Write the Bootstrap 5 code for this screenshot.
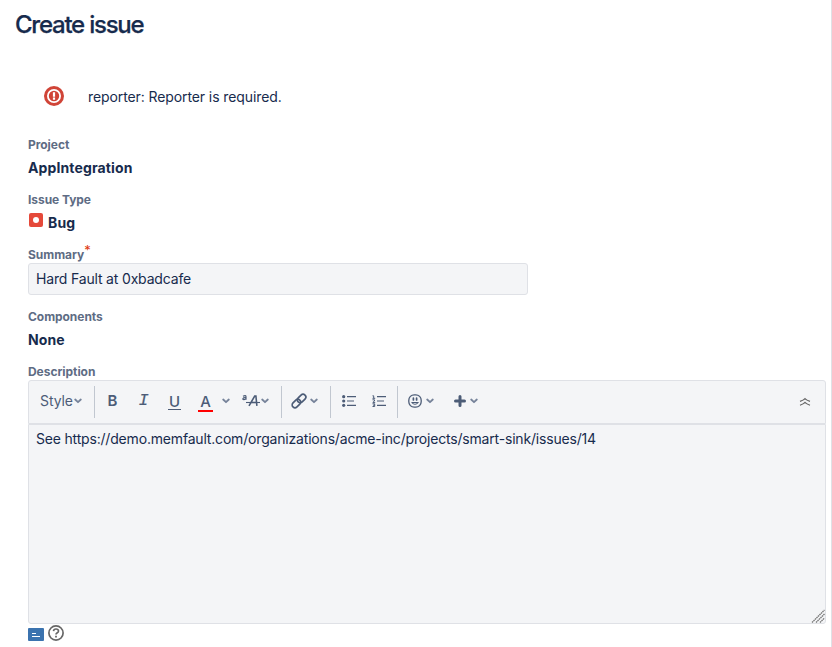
<!DOCTYPE html>
<html lang="en">
<head>
<meta charset="utf-8">
<meta name="viewport" content="width=device-width, initial-scale=1">
<title>Create issue</title>
<link href="https://cdn.jsdelivr.net/npm/bootstrap@5.3.0/dist/css/bootstrap.min.css" rel="stylesheet">
<style>
body{font-family:Inter,"Liberation Sans",sans-serif;font-size:14px;line-height:20px;color:#172b4d;background:#fff;overflow:hidden}
.page{width:832px;height:647px;border-right:1px solid #dfe1e6;padding:9px 5px 0 15px}
.title{font-size:24px;line-height:32px;font-weight:500;letter-spacing:-1.24px;color:#172b4d;-webkit-text-stroke:.25px #172b4d}
.notice{margin:45px 0 0 28px;height:22px}
.notice svg{margin-top:-2px}
.notice-text{margin-left:23px;letter-spacing:-.1px}
.fields{padding-left:13px;margin-top:29px}
.field{height:55px}
.field-label{font-size:12px;line-height:16px;font-weight:700;letter-spacing:-.05px;color:#5e6c84;display:block}
.field-value{font-weight:700;line-height:20px;margin-top:5px;height:20px;letter-spacing:.12px}
.field-summary{height:62px}
.req{color:#de350b;font-size:13px;font-weight:400;position:relative;top:-4px;line-height:1}
.text-input{width:500px;height:32px;border:1px solid #dfe1e6;border-radius:3px;background:#f4f5f7;color:#172b4d;padding:0 7px 2px;font-size:14px;line-height:20px;letter-spacing:-.17px}
.editor-bar{height:44px;border:1px solid #dfe1e6;border-radius:3px 3px 0 0;background:#f4f5f7;color:#4c5c77;padding-top:5px}
.tool-group{height:32px;border-right:1px solid #c1c7d0;padding-bottom:2px}
.tool-group:last-of-type{border-right:0}
.tool{width:31px;border:0;background:none;padding:0;color:#4c5c77;font-size:16px;line-height:20px;text-align:center}
.tool-b{font-weight:600;font-size:15px}
.ital{font-family:"Liberation Mono",monospace;font-style:italic;font-size:17px;-webkit-text-stroke:.2px #4c5c77}
.under{border-bottom:1px solid #4c5c77;display:inline-block;line-height:14px;padding:0 1px;font-weight:500;font-size:15px}
.colour{border-bottom:2px solid #f00;display:inline-block;line-height:17px;padding:0 2px;font-weight:500;font-size:15px}
.g-style{width:66px;padding-left:11px}
.style-name{width:34px;letter-spacing:-.1px}
.g-text{width:187px;padding-left:2px}
.first-chev{margin-left:1px}
.more{margin-left:12px;margin-right:1px}
.g-link{width:49px;padding-left:9px;gap:3px}
.g-list{width:67px;padding-left:11px;gap:16px}
.g-insert{width:90px;padding-left:10px;gap:4px}
.plus{margin-left:16px}
.collapse-icon{margin:11px 14px 0 0}
.editor-area{height:200px;border:1px solid #dfe1e6;border-radius:0 0 3px 3px;background:#f4f5f7;color:#172b4d;padding:4px 7px;font-size:14px;line-height:20px;letter-spacing:-.183px;resize:none}
.grip{right:1px;bottom:1px}
.below{margin-top:1px}
.below svg:first-child{margin-top:3px}
</style>
<script src="https://cdn.jsdelivr.net/npm/bootstrap@5.3.0/dist/js/bootstrap.bundle.min.js"></script>
</head>
<body>
<svg class="d-none">
  <symbol id="chev" viewBox="0 0 8 6"><path d="M1.2 1.5 4 4.2 6.8 1.5" fill="none" stroke="#76839a" stroke-width="1.8" stroke-linecap="round" stroke-linejoin="round"/></symbol>
</svg>
<main class="page">
  <h1 class="title m-0">Create issue</h1>
  <div class="notice d-flex align-items-center" role="alert">
    <svg width="22" height="22" viewBox="0 0 22 22"><circle cx="11" cy="11" r="10" fill="#d04437"/><circle cx="11" cy="11" r="6.1" fill="none" stroke="#fff" stroke-width="1.8"/><path d="M11 7.2v4.6M11 12.6v2.2" stroke="#fff" stroke-width="2.2"/></svg>
    <span class="notice-text">reporter: Reporter is required.</span>
  </div>
  <form class="fields">
    <div class="field"><span class="field-label">Project</span><div class="field-value">AppIntegration</div></div>
    <div class="field"><span class="field-label">Issue Type</span>
      <div class="field-value d-flex"><svg class="me-1" width="16" height="16" viewBox="0 0 16 16"><rect x="1" y="0" width="14" height="14" rx="2" fill="#e5493a"/><circle cx="8" cy="7" r="3" fill="#fff"/></svg><span>Bug</span></div></div>
    <div class="field-summary"><label class="field-label" for="summary">Summary<span class="req">*</span></label>
      <input id="summary" class="form-control text-input" type="text" value="Hard Fault at 0xbadcafe"></div>
    <div class="field"><span class="field-label">Components</span><div class="field-value">None</div></div>
    <label class="field-label" for="description">Description</label>
    <div class="editor-bar d-flex align-items-start">
      <div class="tool-group d-flex align-items-center g-style"><span class="style-name">Style</span><svg width="8" height="6"><use href="#chev"/></svg></div>
      <div class="tool-group d-flex align-items-center g-text">
        <button type="button" class="tool tool-b">B</button>
        <button type="button" class="tool ital">I</button>
        <button type="button" class="tool"><span class="under">U</span></button>
        <button type="button" class="tool"><span class="colour">A</span></button>
        <svg class="first-chev" width="8" height="6"><use href="#chev"/></svg>
        <svg class="more" width="18" height="14" viewBox="0 0 18 14" fill="none" stroke="#4c5c77"><path d="M7 11.8 12.7 2h1.2l1 9.8M9.2 8.5h5.6" stroke-width="1.6"/><path d="M4 8.5h14" stroke-width="1.1"/><path d="M1 2.2q3-1.4 3 .6v2.9M4 3.6C.2 3.2.2 6 2 5.7q1.4-.1 2-1.2" stroke-width="1.2"/></svg>
        <svg width="8" height="6"><use href="#chev"/></svg>
      </div>
      <div class="tool-group d-flex align-items-center g-link">
        <svg width="16" height="16" viewBox="0 0 16 16" fill="none" stroke="#4c5c77" stroke-width="1.7"><rect x="5.8" y="2.7" width="9.6" height="5.6" rx="2.8" transform="rotate(-45 10.600 5.500)"/><rect x=".6" y="7.7" width="9.6" height="5.6" rx="2.8" transform="rotate(-45 5.400 10.500)"/></svg>
        <svg width="8" height="6"><use href="#chev"/></svg>
      </div>
      <div class="tool-group d-flex align-items-center g-list">
        <svg width="14" height="12" viewBox="0 0 14 12" fill="#4c5c77"><circle cx="1.7" cy="1.7" r="1.6"/><circle cx="1.7" cy="6" r="1.6"/><circle cx="1.7" cy="10.3" r="1.6"/><path d="M5 1h9v1.200H5zM5 5.400h7v1.200H5zM5 9.800h9V11H5z"/></svg>
        <svg width="14" height="12" viewBox="0 0 14 12" fill="none" stroke="#4c5c77"><path d="M5 1.600h9M5 6h7M5 10.400h9" stroke-width="1.2"/><path d="M.5 .8h1.200v2.400M.5 3.300h2.700M.5 4.800h2v1.200L.8 7.400h2.400M.5 8.800h2.200v2.700H.5M1 10.200h1.600" stroke-width="1"/></svg>
      </div>
      <div class="tool-group d-flex align-items-center g-insert">
        <svg width="14" height="14" viewBox="0 0 14 14" fill="none" stroke="#4c5c77" stroke-linecap="round"><rect x=".8" y=".8" width="12.4" height="12.4" rx="5.400" stroke-width="1.300"/><path d="M5.400 4.200v1.800M8.600 4.200v1.800" stroke-width="1.700"/><path d="M3.800 8.500q3.200 3.600 6.400 0z" stroke-width="1.100" stroke-linejoin="round"/></svg>
        <svg width="8" height="6"><use href="#chev"/></svg>
        <svg class="plus" width="12" height="12" viewBox="0 0 12 12"><path d="M6 1.500v9M1.500 6h9" stroke="#4c5c77" stroke-width="3" stroke-linecap="round"/></svg>
        <svg width="8" height="6"><use href="#chev"/></svg>
      </div>
      <svg class="collapse-icon ms-auto" width="12" height="10" viewBox="0 0 12 10"><path d="M1 4.400Q4.500 3.200 6 1.600 7.500 3.200 11 4.400M1 8.200Q4.500 7 6 5.400 7.500 7 11 8.200" fill="none" stroke="#666" stroke-width="1.200"/></svg>
    </div>
    <div class="position-relative">
      <textarea id="description" class="form-control editor-area" spellcheck="false">See https://demo.memfault.com/organizations/acme-inc/projects/smart-sink/issues/14</textarea>
      <svg class="grip position-absolute" width="14" height="14" viewBox="0 0 14 14"><path d="M1 13.500 13.500 1M5 13.500 13.500 5M9 13.500 13.500 9" stroke="#777" stroke-width="1.300" stroke-dasharray="1.600 .5"/></svg>
    </div>
    <div class="d-flex below">
      <svg width="16" height="13" viewBox="0 0 16 13"><rect width="16" height="13" rx="1" fill="#3b73af"/><path d="M4 5h4v1H4zM4 8h8v1H4z" fill="#fff"/></svg>
      <svg class="ms-1" width="16" height="16" viewBox="0 0 16 16" fill="none" stroke="#666"><circle cx="8" cy="8" r="7.100" stroke-width="1.700"/><path d="M5.500 6.200Q5.700 4 8 4t2.500 2Q10.500 7.200 9 8 8 8.600 8 9.600" stroke-width="1.700"/><path d="M8 10.800v1.800" stroke-width="1.800"/></svg>
    </div>
  </form>
</main>
</body>
</html>
